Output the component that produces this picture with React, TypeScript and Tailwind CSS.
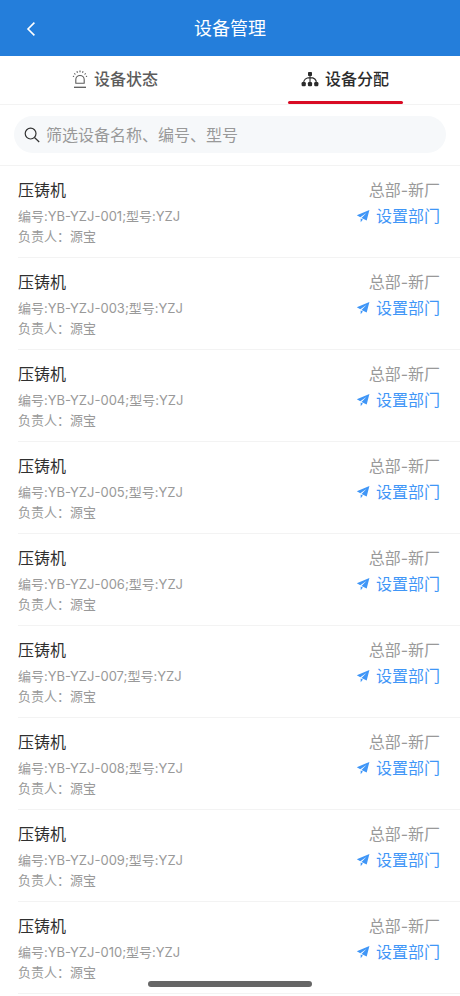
import { useState } from 'react';

type Device = {
  code: string;
  name: string;
  model: string;
  owner: string;
  department: string;
};

const devices: Device[] = ['001', '003', '004', '005', '006', '007', '008', '009', '010'].map((no) => ({
  code: `YB-YZJ-${no}`,
  name: '压铸机',
  model: 'YZJ',
  owner: '源宝',
  department: '总部-新厂',
}));

const BackIcon = () => (
  <svg viewBox="0 0 10 16" className="w-[10px] h-4" fill="none" stroke="currentColor" strokeWidth="1.6">
    <path d="M8.4 1.6 2 8l6.4 6.4" />
  </svg>
);

const AlarmIcon = () => (
  <svg viewBox="0 0 16 20" className="w-4 h-5" fill="none" stroke="currentColor" strokeWidth="1.1">
    <path d="M3.800 14.200V10.700a4.200 4.200 0 0 1 8.400 0v3.500z" strokeLinejoin="round" />
    <path d="M2 18.300h12" strokeWidth="1.300" />
    <path d="M8 1.500v1.800M4.900 2.300l.6 1.500M11.100 2.300l-.6 1.500M2.300 4.300l1.100 1.200M13.700 4.300l-1.100 1.200M.9 7.200l1.200.4M15.100 7.200l-1.200.4" />
  </svg>
);

const OrgIcon = () => (
  <svg viewBox="0 0 18 16" className="w-[18px] h-4" fill="none" stroke="currentColor" strokeWidth="1.100">
    <path d="M9 4v8M2.600 12c0-3.200 2.200-5.400 6.400-5.400s6.400 2.200 6.400 5.400" />
    <g fill="currentColor" stroke="none">
      <rect x="7" y="1" width="4" height="4" rx=".8" />
      <rect x=".6" y="11" width="4.200" height="4.200" rx="1.200" />
      <rect x="6.900" y="11" width="4.200" height="4.200" rx="1.200" />
      <rect x="13.200" y="11" width="4.200" height="4.200" rx="1.200" />
    </g>
  </svg>
);

const SearchIcon = () => (
  <svg viewBox="0 0 16 16" className="w-4 h-4 shrink-0" fill="none" stroke="currentColor" strokeWidth="1.200">
    <circle cx="6.600" cy="6.600" r="5.400" />
    <path d="m10.500 10.500 4.700 4.500" />
  </svg>
);

const PlaneIcon = () => (
  <svg viewBox="0 0 14 14" className="w-[14px] h-[14px]" fill="currentColor">
    <path d="M13.400.9.8 6.300l3.500 2L10.400 4 5.500 9l5.200 2.600z" />
    <path d="M4.700 9.400v3.900l2.200-2.700z" />
  </svg>
);

const tabs = [
  { id: 'status', label: '设备状态', icon: <AlarmIcon /> },
  { id: 'assign', label: '设备分配', icon: <OrgIcon /> },
];

const DeviceItem = ({ device }: { device: Device }) => (
  <li className="ml-[18px] flex justify-between border-b border-[#f3f3f3] pt-3 pr-5 pb-[11px]">
    <div>
      <h2 className="text-base leading-6 text-[#2f2f2f]">{device.name}</h2>
      <p className="mt-1 text-[13px] leading-5 text-[#999999]">
        编号:{device.code};型号:{device.model}
      </p>
      <p className="text-[13px] leading-5 text-[#999999]">负责人：{device.owner}</p>
    </div>
    <div className="flex flex-col items-end">
      <span className="text-base leading-6 text-[#999999]">{device.department}</span>
      <button type="button" className="mt-1 flex items-center gap-1.5 text-base leading-5 text-[#3f96f7]">
        <PlaneIcon />
        设置部门
      </button>
    </div>
  </li>
);

export default function App() {
  const [activeTab, setActiveTab] = useState('assign');
  const [keyword, setKeyword] = useState('');

  const visible = devices.filter((d) => `${d.name}${d.code}${d.model}`.includes(keyword));

  return (
    <div className="min-h-screen bg-white font-[Inter,'Noto_Sans_CJK_SC',sans-serif]">
      <header className="grid h-14 grid-cols-[1fr_auto_1fr] items-center bg-[#247edb] pt-0.5 text-white">
        <button type="button" aria-label="返回" className="flex w-9 justify-end">
          <BackIcon />
        </button>
        <h1 className="text-lg">设备管理</h1>
      </header>

      <nav className="flex h-[49px] border-b border-[#f3f3f3] pt-px">
        {tabs.map((tab) => {
          const active = tab.id === activeTab;
          return (
            <button
              key={tab.id}
              type="button"
              onClick={() => setActiveTab(tab.id)}
              className={`flex flex-1 flex-col items-center font-medium ${active ? 'text-[#2b2b2b]' : 'text-[#5c5c5c]'}`}
            >
              <span className="flex flex-1 items-center gap-1.5 text-base">
                {tab.icon}
                {tab.label}
              </span>
              <span className={`h-[3px] w-1/2 rounded-full ${active ? 'bg-[#d90b24]' : 'bg-transparent'}`} />
            </button>
          );
        })}
      </nav>

      <div className="border-b border-[#f3f3f3] px-[14px] pt-[11px] pb-3">
        <label className="flex h-[37px] items-center gap-1.5 rounded-full bg-[#f6f8fa] px-[10px] text-[#333333]">
          <SearchIcon />
          <input
            type="text"
            aria-label="筛选设备"
            placeholder="筛选设备名称、编号、型号"
            value={keyword}
            onChange={(e) => setKeyword(e.target.value)}
            className="min-w-0 flex-1 bg-transparent text-base outline-none placeholder:text-[#999999]"
          />
        </label>
      </div>

      <ul>
        {visible.map((device) => (
          <DeviceItem key={device.code} device={device} />
        ))}
      </ul>

      <div className="fixed inset-x-0 bottom-[9px] flex justify-center">
        <div className="h-[6px] w-[164px] rounded-full bg-[#666666]" />
      </div>
    </div>
  );
}
